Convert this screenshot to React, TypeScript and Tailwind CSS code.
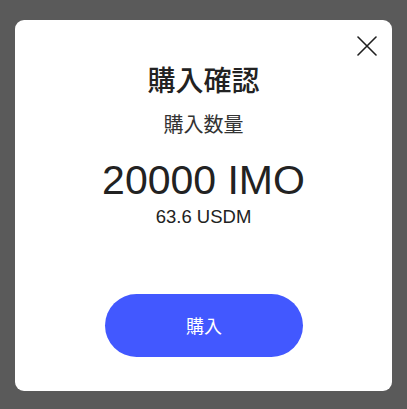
import React from 'react';

const CloseIcon: React.FC = () => (
  <svg xmlns="http://www.w3.org/2000/svg" className="h-5 w-5" fill="none" viewBox="0 0 20 20" stroke="currentColor">
    <path strokeLinecap="round" strokeWidth={1.6} d="M1 1l18 18M19 1L1 19" />
  </svg>
);

export default function App() {
  return (
    <div className="w-[407px] h-[409px] bg-[#5a5a5a] pt-[20px] pl-[15px] font-['Liberation_Sans','Noto_Sans_CJK_JP',sans-serif]">
      <div className="relative w-[377px] h-[371px] bg-white rounded-[9px] flex flex-col items-center pt-[39px]">
        <button className="absolute top-[16px] right-[15px] text-[#1f1f1f]" aria-label="Close">
          <CloseIcon />
        </button>

        <h3 className="text-[28px] leading-[40px] font-medium text-[#222] font-['Noto_Sans_CJK_JP',sans-serif]">購入確認</h3>
        <p className="mt-[11px] text-[20px] leading-[28px] text-[#333] font-['Noto_Sans_CJK_JP',sans-serif]">購入数量</p>

        <div className="mt-[18px] text-[41px] leading-[48px] text-[#222]">20000 IMO</div>
        <div className="mt-[1px] text-[18.5px] leading-[24px] text-[#222]">63.6 USDM</div>

        <button className="mt-[65px] w-[198px] h-[63px] rounded-full bg-[#4258ff] text-white text-[18px] font-['Noto_Sans_CJK_JP',sans-serif] ml-[1px]">
          購入
        </button>
      </div>
    </div>
  );
}
